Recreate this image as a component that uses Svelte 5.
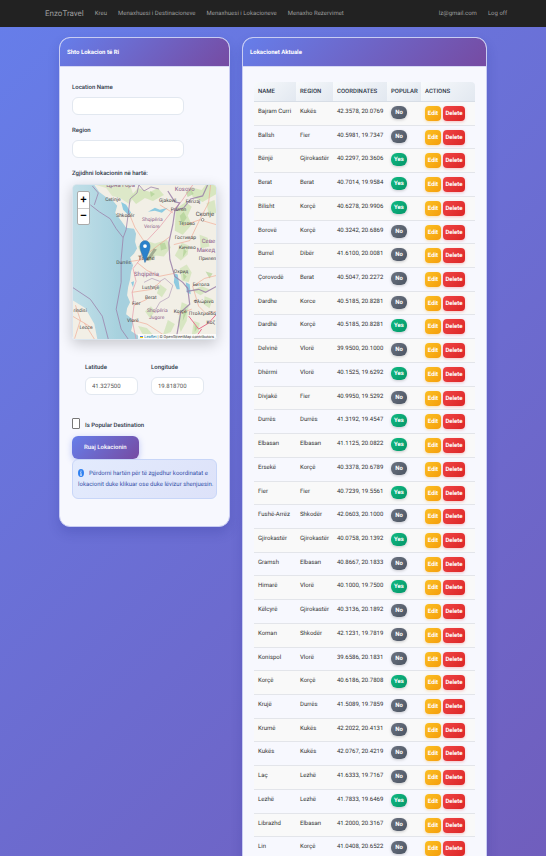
<script>
  const links = ['Kreu', 'Menaxhuesi i Destinacioneve', 'Menaxhuesi i Lokacioneve', 'Menaxho Rezervimet'];

  const locations = [
    ['Bajram Curri', 'Kukës', '42.3578, 20.0769', false],
    ['Ballsh', 'Fier', '40.5981, 19.7347', false],
    ['Bënjë', 'Gjirokastër', '40.2297, 20.3606', true],
    ['Berat', 'Berat', '40.7014, 19.9584', true],
    ['Bilisht', 'Korçë', '40.6278, 20.9906', true],
    ['Borovë', 'Korçë', '40.3242, 20.6869', false],
    ['Burrel', 'Dibër', '41.6100, 20.0081', false],
    ['Çorovodë', 'Berat', '40.5047, 20.2272', false],
    ['Dardhe', 'Korce', '40.5185, 20.8281', false],
    ['Dardhë', 'Korçë', '40.5185, 20.8281', true],
    ['Delvinë', 'Vlorë', '39.9500, 20.1000', false],
    ['Dhërmi', 'Vlorë', '40.1525, 19.6292', true],
    ['Divjakë', 'Fier', '40.9950, 19.5292', false],
    ['Durrës', 'Durrës', '41.3192, 19.4547', true],
    ['Elbasan', 'Elbasan', '41.1125, 20.0822', true],
    ['Ersekë', 'Korçë', '40.3378, 20.6789', false],
    ['Fier', 'Fier', '40.7239, 19.5561', true],
    ['Fushë-Arrëz', 'Shkodër', '42.0603, 20.1000', false],
    ['Gjirokastër', 'Gjirokastër', '40.0758, 20.1392', true],
    ['Gramsh', 'Elbasan', '40.8667, 20.1833', false],
    ['Himarë', 'Vlorë', '40.1000, 19.7500', true],
    ['Këlcyrë', 'Gjirokastër', '40.3136, 20.1892', false],
    ['Koman', 'Shkodër', '42.1231, 19.7819', false],
    ['Konispol', 'Vlorë', '39.6586, 20.1831', false],
    ['Korçë', 'Korçë', '40.6186, 20.7808', true],
    ['Krujë', 'Durrës', '41.5089, 19.7859', false],
    ['Krumë', 'Kukës', '42.2022, 20.4131', false],
    ['Kukës', 'Kukës', '42.0767, 20.4219', false],
    ['Laç', 'Lezhë', '41.6333, 19.7167', false],
    ['Lezhë', 'Lezhë', '41.7833, 19.6469', true],
    ['Librazhd', 'Elbasan', '41.2000, 20.3167', false],
    ['Lin', 'Korçë', '41.0408, 20.6522', false]
  ];

  // [x, y, label]
  const towns = [
    [33, 16, 'Cetinje'], [44, 32, 'Shkodër'], [87, 17, 'Gjakovë'], [114, 18, 'Ferizaj'],
    [99, 26, 'Prizren'], [107, 40, 'Тетово'], [103, 54, 'Гостивар'], [107, 64, 'Кичево'],
    [127, 75, 'Прилеп'], [44, 80, 'Durrës'], [102, 89, 'Охрид'], [121, 102, 'Битола'],
    [70, 105, 'Lushnjë'], [73, 115, 'Berat'], [60, 121, 'Fier'], [102, 129, 'Korçë'],
    [122, 119, 'Φλώρινα'], [117, 131, 'Πτολεμαΐδα'], [55, 138, 'Vlorë'], [1, 128, 'rindisi'],
    [7, 145, 'Lecce'], [135, 140, 'Κοζ']
  ];

  let name = $state('');
  let region = $state('');
  let latitude = $state('41.327500');
  let longitude = $state('19.818700');
  let popular = $state(false);
</script>

<div class="page">
  <nav class="navbar">
    <a class="brand" href="#home">EnzoTravel</a>
    {#each links as link}
      <a href="#nav">{link}</a>
    {/each}
    <a class="user" href="#account">lz@gmail.com</a>
    <a href="#logoff">Log off</a>
  </nav>

  <main class="columns">
    <section class="card">
      <h2>Shto Lokacion të Ri</h2>
      <form class="form" onsubmit={(e) => e.preventDefault()}>
        <div class="field">
          <label for="name">Location Name</label>
          <input id="name" type="text" bind:value={name} />
        </div>
        <div class="field">
          <label for="region">Region</label>
          <input id="region" type="text" bind:value={region} />
        </div>
        <p class="map-label">Zgjidhni lokacionin në hartë:</p>
        <div class="map">
          <svg viewBox="0 0 145 155" preserveAspectRatio="xMidYMid slice" role="img" aria-label="Harta">
            <defs>
              <linearGradient id="sea" x1="0" x2="1" y1="0" y2="0">
                <stop offset="0" stop-color="#c2dfe8" />
                <stop offset="0.7" stop-color="#a6d1de" />
              </linearGradient>
            </defs>
            <rect width="145" height="155" fill="#f2efe6" />
            <g fill="#cfe3b5">
              <path d="M24 0l10 3 6 8 8 2 9 6 5-7-4-12z" opacity=".6" />
              <path d="M66 3l12 4 8-4 6 7-11 6-8-3-9 6-6-7zM104 24l10-7 6 5-4 9 4 9-9 10-8-4zM118 2l12 3 4-5h11v9l-14 8-10-5z" opacity=".8" />
              <path d="M66 62l8-6 9 3 12-4 4 8-7 9-8-1-6 6-8-5zM110 58l7 3-1 9-7 6-6-5zM108 84l7-4 5 8-3 10-7-2zM128 50l8 3 2 9-9 2zM135 18l8-3 2 13-8 2z" opacity=".7" />
              <path d="M110 118l7 3-2 16-6 11-3-10zM120 106l10-4 8 3-9 6zM122 137l6 2-1 9-7 4zM88 100l7 5-5 8-5-4zM73 127l6-5 4 5-5 7zM96 136l7 4-4 8-8 3zM66 142l9 2 8 9-12-2zM133 112l8 3-3 9-6-4z" opacity=".75" />
            </g>
            <g fill="#a9cf8d" opacity=".6">
              <path d="M108 31l4-4 3 6-5 7zM114 7l5-3 3 5-6 3zM88 59l5-1 2 6-6 2zM112 64l3 3-4 6zM111 88l4 4-3 4zM112 126l3 2-4 9zM123 141l3 3-3 4zM134 87l7 2-3 5zM78 6l5 3-4 3z" />
            </g>
            <path d="M0 0H22L27 7 35 13 40 15 45 21 43 28 49 36 54 43 62 44 64 49 63 57 65 64 62 69 58 73 61 81 59 87 58 95 56 103 55 111 58 118 55 124 54 130 59 134 61 139 59 147 65 151 71 155H25L22 140 13 124 0 116Z" fill="url(#sea)" />
            <path d="M49 17l5 3 5 8-3 2-5-5zM103 89l3 1 2 15h-3l-3-7zM114 98l4 2 1 10-4-2zM59 98l3-1-1 6zM76 27l7-4 5 2 8-2-6 5-7-2z" fill="#8fcbe0" />
            <g fill="none" stroke="#f0a28c" stroke-width=".6">
              <path d="M64 155L60 136 62 121 60 108 64 97 61 84 68 75 73 58 88 42 99 28 110 16 121 0" stroke="#e68ca0" />
              <path d="M68 75l18-14 12-9M65 78l10 8 12 6 15-3M58 77l13-2M60 108l20-3 9-8M62 121l13-6M60 136l15 4 20 13M111 41l17-6 17 5M128 35l-10 21-16 4M128 35l9-17 2-18M121 102l12-8 12-3M121 102l6 20 8 8 10-3M106 130l14-5M73 58l-10-15-5-12M88 20l13 8M0 132l12 7 10 16M3 121l5 15-6 19M12 139l8 5" />
              <path d="M117 132l10 13 10-6 8-9M130 145l-7 10" stroke="#e76f8b" stroke-width="1" />
            </g>
            <g fill="none" stroke="#9b7fa8" stroke-width=".9" opacity=".85">
              <path d="M18 20l9 7 11 7 6 10 7 9-2 22v23l-5 27 5 20 7 10M22 20l4-12-6-7M51 53l3-8 2-15 2-16 7-6 2-9M0 103l18 12 12 17 6 23M67 0l5 6 7-4 8 2" />
              <path d="M96 6l7 11 5 1-5 8-2 14-4 18 1 17 5 17 8 6 5 6 2 16-9 8-2 12-3 17M103 26l9-3 7-9 12-3 5-11M115 107l12-2 7 3 11-6" stroke-width="1.2" />
              <path d="M72 98l8-4 8 3 5-3 8 7-4 12-9 5-4 7" stroke-width=".6" />
            </g>
            <g class="towns">
              {#each towns as [x, y, label]}
                <text {x} {y}>{label}</text>
              {/each}
              <text class="big" x="124" y="31">Скопје</text>
              <text class="big" x="66" y="75">Tiranë</text>
            </g>
            <g class="areas">
              <text x="34" y="2">Црна Гора</text>
              <text x="103" y="6">Kosovo</text>
              <text x="70" y="36" class="small">Shqipëria</text>
              <text x="72" y="43" class="small">Veriore</text>
              <text x="130" y="58">Севе</text>
              <text x="125" y="67">Макед</text>
              <text x="62" y="92">Shqipëria</text>
              <text x="75" y="128" class="small">Shqipëria</text>
              <text x="77" y="135" class="small">Jugore</text>
            </g>
            <circle cx="131" cy="35" r="1.3" fill="#fff" stroke="#555" stroke-width=".6" />
            <path d="M73 77l9-13 3 1-8 11z" opacity=".25" />
            <path d="M73 78C71 70 68 67 68 61.500a5 5.500 0 0 1 10 0C78 67 75 70 73 78z" fill="#2a81cb" stroke="#236fae" stroke-width=".6" />
            <circle cx="73" cy="61.500" r="1.900" fill="#fff" />
          </svg>
          <div class="zoom">
            <button type="button" aria-label="Zoom in">+</button>
            <button type="button" aria-label="Zoom out">−</button>
          </div>
          <div class="credit">
            <svg viewBox="0 0 6 4" aria-hidden="true"><path fill="#4c7be1" d="M0 0h6v2H0z" /><path fill="#ffd500" d="M0 2h6v2H0z" /></svg>
            <a href="#leaflet">Leaflet</a> | © OpenStreetMap contributors
          </div>
        </div>
        <div class="coords">
          <div class="field">
            <label for="lat">Latitude</label>
            <input id="lat" type="text" bind:value={latitude} />
          </div>
          <div class="field">
            <label for="lng">Longitude</label>
            <input id="lng" type="text" bind:value={longitude} />
          </div>
        </div>
        <div class="check">
          <input id="popular" type="checkbox" bind:checked={popular} />
          <label for="popular">Is Popular Destination</label>
        </div>
        <button class="save" type="submit">Ruaj Lokacionin</button>
        <p class="hint">
          <svg viewBox="0 0 6 8" aria-hidden="true">
            <ellipse cx="3" cy="4" rx="3" ry="4" fill="#2f80f0" />
            <path d="M3 1.600v1.200M2.300 3.600H3v2.500M2 6.200h2" fill="none" stroke="#fff" stroke-width=".8" />
          </svg>Përdorni hartën për të zgjedhur koordinatat e lokacionit duke klikuar ose duke lëvizur shenjuesin.
        </p>
      </form>
    </section>

    <section class="card">
      <h2>Lokacionet Aktuale</h2>
      <div class="list">
        <table>
          <colgroup>
            <col class="c-name" /><col class="c-region" /><col class="c-coords" /><col class="c-popular" /><col />
          </colgroup>
          <thead>
            <tr><th>NAME</th><th>REGION</th><th>COORDINATES</th><th>POPULAR</th><th>ACTIONS</th></tr>
          </thead>
          <tbody>
            {#each locations as [place, area, position, isPopular]}
              <tr>
                <td>{place}</td>
                <td>{area}</td>
                <td>{position}</td>
                <td><span class="badge" class:yes={isPopular}>{isPopular ? 'Yes' : 'No'}</span></td>
                <td>
                  <div class="actions">
                    <button class="edit" type="button">Edit</button>
                    <button class="delete" type="button">Delete</button>
                  </div>
                </td>
              </tr>
            {/each}
          </tbody>
        </table>
      </div>
    </section>
  </main>
</div>

<style>
  :global(body) {
    margin: 0;
  }

  .page {
    box-sizing: border-box;
    height: 100vh;
    overflow: hidden;
    background: linear-gradient(135deg, #667eea 0%, #764ba2 100%) 0 0 / 100% 1690px;
    color: #2d3748;
    font: 6px/11px Roboto, 'Open Sans', sans-serif;
    text-rendering: geometricPrecision;
  }

  .page *,
  .page *::before {
    box-sizing: border-box;
  }

  button,
  input {
    font: inherit;
    text-rendering: inherit;
    margin: 0;
  }

  .navbar {
    display: flex;
    align-items: center;
    gap: 11px;
    height: 27px;
    padding: 0 39px 0 45px;
    background: #222;
    white-space: nowrap;
  }

  .navbar a {
    color: #9d9d9d;
    text-decoration: none;
  }

  .navbar .brand {
    font-size: 8px;
  }

  .navbar .user {
    margin-left: auto;
  }

  .columns {
    display: grid;
    grid-template-columns: 171fr 245fr;
    align-items: start;
    gap: 12px;
    padding: 10px 59px;
  }

  .card {
    overflow: hidden;
    border: 1px solid #c9cdf3;
    border-radius: 11px;
    background: #f7f8fe;
    box-shadow: 0 6px 12px rgba(31, 38, 135, 0.2);
  }

  h2 {
    margin: 0;
    padding: 9px 7px 8px;
    border-bottom: 1px solid #d6d8f3;
    background: linear-gradient(135deg, #667eea 0%, #764ba2 100%);
    color: #fff;
    font-size: 6px;
    line-height: 11px;
  }

  .form {
    padding: 15px 12px 27px;
  }

  .field {
    display: flex;
    flex-direction: column;
    gap: 4px;
    margin-bottom: 10px;
  }

  label,
  .map-label {
    font-weight: 500;
  }

  input[type='text'] {
    width: 112px;
    height: 18px;
    padding: 0 6px;
    border: 1px solid #e2e8f0;
    border-radius: 6px;
    background: #fff;
    color: #555;
  }

  .map-label {
    margin: 0 0 5px;
  }

  .map {
    position: relative;
    height: 156px;
    overflow: hidden;
    border: 1px solid #dbe5ee;
    border-radius: 4px;
    box-shadow: 0 4px 14px rgba(0, 0, 0, 0.2);
  }

  .map > svg {
    display: block;
    width: 100%;
    height: 100%;
  }

  .towns text {
    fill: #444;
    font-size: 5px;
  }

  .towns .big {
    font-size: 6px;
  }

  .areas text {
    fill: #8d618b;
    font-size: 6px;
  }

  .areas .small {
    font-size: 5px;
  }

  .zoom {
    position: absolute;
    top: 6px;
    left: 4px;
    display: flex;
    flex-direction: column;
    border: 1px solid #aaa;
    border-radius: 2px;
    background: #fff;
  }

  .zoom button {
    width: 11px;
    height: 16px;
    padding: 0;
    border: 0;
    background: none;
    color: #000;
    font: bold 11px/15px 'Liberation Sans', sans-serif;
  }

  .zoom button + button {
    border-top: 1px solid #ccc;
  }

  .credit {
    position: absolute;
    right: 0;
    bottom: 0;
    padding: 0 2px;
    background: rgba(255, 255, 255, 0.8);
    color: #333;
    font-size: 4px;
    line-height: 5px;
    white-space: nowrap;
  }

  .credit svg {
    width: 3px;
    height: 2px;
  }

  .credit a {
    color: #0078a8;
    text-decoration: none;
  }

  .coords {
    display: flex;
    gap: 13px;
    padding: 22px 13px 13px;
  }

  .coords input[type='text'] {
    width: 53px;
  }

  .check {
    display: flex;
    align-items: flex-end;
    gap: 5px;
    margin-bottom: 5px;
  }

  .check input {
    appearance: none;
    width: 8px;
    height: 11px;
    margin-bottom: 2px;
    border: 1px solid #777;
    border-radius: 1px;
    background: #fff;
  }

  .save {
    display: block;
    height: 23px;
    padding: 0 12px;
    border: 0;
    border-radius: 6px;
    background: linear-gradient(135deg, #667eea 0%, #764ba2 100%);
    box-shadow: 0 2px 6px rgba(102, 126, 234, 0.4);
    color: #fff;
    font-weight: 500;
  }

  .hint {
    margin: 0;
    padding: 8px 0 8px 5px;
    border: 1px solid #c8d6f8;
    border-radius: 6px;
    background: linear-gradient(135deg, #e3ebfd, #dde2f9);
    color: #3450a8;
  }

  .hint svg {
    width: 6px;
    height: 8px;
    margin-right: 5px;
    vertical-align: -2px;
  }

  .list {
    padding: 15px 11px;
  }

  table {
    width: 100%;
    height: 779px;
    border-collapse: separate;
    border-spacing: 0;
    table-layout: fixed;
    color: #333;
    white-space: nowrap;
  }

  .c-name {
    width: 42px;
  }

  .c-region {
    width: 37px;
  }

  .c-coords {
    width: 54px;
  }

  .c-popular {
    width: 34px;
  }

  th {
    height: 20px;
    padding: 0 4px;
    border-bottom: 1px solid #d8dee6;
    background: linear-gradient(135deg, #f8fafc 0%, #e2e8f0 100%);
    color: #2d3748;
    font-weight: 500;
    text-align: left;
  }

  th:first-child {
    border-top-left-radius: 4px;
  }

  th:last-child {
    border-top-right-radius: 4px;
  }

  td {
    height: 23px;
    padding: 4px 3px 3px 4px;
    border-bottom: 1px solid #e3e5ea;
    vertical-align: top;
  }

  tbody tr:nth-child(odd) {
    background: #f9f9f9;
  }

  .badge {
    display: block;
    width: 16px;
    border-radius: 6px;
    background: linear-gradient(135deg, #6b7280, #4b5563);
    box-shadow: 0 1px 3px rgba(0, 0, 0, 0.2);
    color: #fff;
    font-weight: bold;
    line-height: 13px;
    text-align: center;
  }

  .badge.yes {
    background: linear-gradient(135deg, #10b981, #059669);
  }

  .actions {
    display: flex;
    gap: 2px;
  }

  .actions button {
    height: 15px;
    padding: 0;
    border: 0;
    border-radius: 4px;
    color: #fff;
    font-weight: bold;
  }

  .actions .edit {
    width: 16px;
    background: linear-gradient(135deg, #fbbf24, #f59e0b);
    box-shadow: 0 1px 3px rgba(245, 158, 11, 0.3);
  }

  .actions .delete {
    width: 22px;
    background: linear-gradient(135deg, #ef4444, #dc2626);
    box-shadow: 0 1px 3px rgba(239, 68, 68, 0.3);
  }
</style>
